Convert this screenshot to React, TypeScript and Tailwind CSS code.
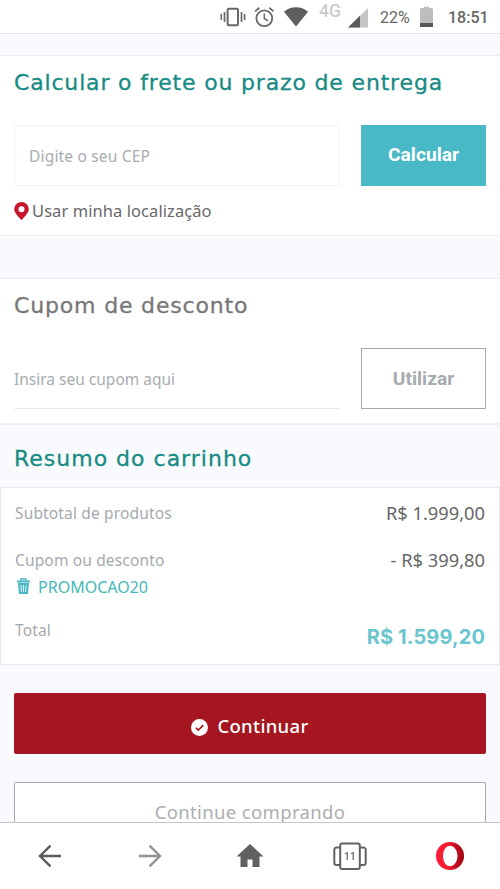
import type { ReactNode } from "react";

type SummaryRowProps = {
  label: string;
  children: ReactNode;
};

function StatusBar() {
  return (
    <header className="flex h-[34px] shrink-0 items-center border-b border-[#e4e6e8] bg-white pl-[220px] font-[Roboto,sans-serif] text-[#666]">
      {/* Vibrate */}
      <svg className="h-[22px] w-[26px] shrink-0" viewBox="0 0 26 22" fill="none" stroke="#686868" strokeWidth="2">
        <rect x="7.6" y="2.8" width="10.4" height="16.4" rx="1.2" />
        <path d="M4.5 6v10M21.5 6v10" strokeWidth="1.7" />
        <path d="M1.3 8v6M24.6 8v6" strokeWidth="1.6" />
      </svg>
      {/* Alarm */}
      <svg className="ml-[8px] h-[22px] w-[20px] shrink-0" viewBox="0 0 20 22" fill="none" stroke="#686868" strokeWidth="1.8">
        <circle cx="10.3" cy="12.2" r="7.9" />
        <path d="M10.3 7.5v5l3.7 2.3" strokeWidth="1.5" />
        <path d="M1.1 5.4 5.3 1.8M15.3 1.8l4.200 3.6" />
      </svg>
      {/* Wi-Fi */}
      <svg className="ml-[9px] h-[22px] w-[26px] shrink-0" viewBox="0 0 26 22">
        <path d="M1 5.700C8-.1 18-.1 25 5.700L13 20.600Z" fill="#5f5f5f" />
      </svg>
      <span className="ml-[10px] mt-[-9px] w-[24px] text-[17.5px] font-medium leading-none text-[#cbcbcb]">4G</span>
      {/* Signal */}
      <svg className="ml-[5px] h-[22px] w-[20px] shrink-0" viewBox="0 0 20 22">
        <path d="M0 21.500 20 2v19.500Z" fill="#c4c4c4" />
        <path d="M0 21.500 12 9.800v11.700Z" fill="#5b5b5b" />
      </svg>
      <span className="ml-[12px] mt-[3px] w-[32px] whitespace-nowrap text-[16px] leading-none">22%</span>
      {/* Battery */}
      <svg className="ml-[8px] h-[22px] w-[13px] shrink-0" viewBox="0 0 13 22">
        <path d="M0 3.500A1.500 1.500 0 0 1 1.500 2H4V.8h5V2h2.500A1.500 1.500 0 0 1 13 3.500V17H0Z" fill="#bdbdbd" />
        <path d="M0 17h13v4H0Z" fill="#595959" />
      </svg>
      <span className="ml-[15px] mt-[3px] whitespace-nowrap text-[16px] font-medium leading-none">18:51</span>
    </header>
  );
}

function SummaryRow({ label, children }: SummaryRowProps) {
  return (
    <div className="flex h-6 items-center justify-between">
      <span className="mt-[2px] text-[15.5px] tracking-[0.15px] text-[#a5aaaf]">{label}</span>
      {children}
    </div>
  );
}

function BrowserNav() {
  return (
    <nav className="flex h-[67px] shrink-0 items-center justify-around border-t border-[#c4c4c4] bg-white">
      <svg className="h-[34px] w-[34px]" viewBox="0 0 34 34" fill="none" stroke="#5c5c5c" strokeWidth="2.4">
        <path d="M28 17H7.500M17.500 6.700 7 17l10.500 10.300" />
      </svg>
      <svg className="h-[34px] w-[34px]" viewBox="0 0 34 34" fill="none" stroke="#929292" strokeWidth="2.4">
        <path d="M6 17h20.500M16.500 6.700 27 17 16.500 27.300" />
      </svg>
      <svg className="h-[34px] w-[34px]" viewBox="0 0 34 34" fill="#606060">
        <path d="M17 5 3.500 17.400h4V28h7v-7.500h5V28h7V17.400h4Z" />
      </svg>
      <div className="relative flex h-[34px] w-[34px] items-center justify-center">
        <svg className="absolute inset-0" viewBox="0 0 34 34" fill="none" stroke="#626262" strokeWidth="2">
          <rect x="7.200" y="4.500" width="19.600" height="25.500" rx="2" />
          <path d="M7 8.500H3.500A2.200 2.200 0 0 0 1.300 10.700v13.100A2.200 2.200 0 0 0 3.500 26H7M27 8.500h3.500a2.200 2.200 0 0 1 2.200 2.200v13.100a2.200 2.200 0 0 1-2.200 2.200H27" />
        </svg>
        <span className="relative font-[Roboto,sans-serif] text-[10px] font-medium tracking-[0.3px] text-[#626262]">11</span>
      </div>
      <svg className="h-[34px] w-[34px]" viewBox="0 0 34 34">
        <defs>
          <linearGradient id="opera" x1="0" x2="1" y1="0" y2="0">
            <stop offset="0.35" stopColor="#f81b33" />
            <stop offset="1" stopColor="#9c0312" />
          </linearGradient>
        </defs>
        <path fillRule="evenodd" fill="url(#opera)" d="M17 3a14 14 0 1 1 0 28 14 14 0 0 1 0-28Zm0 3.700c-4 0-7 4.600-7 10.300S13 27.300 17 27.300s7.500-4.600 7.500-10.300-3.500-10.300-7.500-10.300Z" />
      </svg>
    </nav>
  );
}

export default function App() {
  return (
    <div className="flex h-[889px] w-[500px] flex-col overflow-hidden bg-[#f8fafd] font-['Noto_Sans',sans-serif]">
      <StatusBar />

      <main className="min-h-0 flex-1 overflow-hidden pt-[21px]">
        {/* Shipping estimate */}
        <section className="h-[181px] border-y border-[#e9edf1] bg-white px-[14px] pt-[11px]">
          <h2 className="h-8 whitespace-nowrap font-['DejaVu_Sans',sans-serif] text-[22px] leading-8 tracking-[0.83px] text-[#178b84] [-webkit-text-stroke:0.3px]">
            Calcular o frete ou prazo de entrega
          </h2>
          <div className="mt-[26px] flex gap-[21px]">
            <input
              type="text"
              placeholder="Digite o seu CEP"
              className="h-[61px] w-[326px] border border-[#f3f4f6] bg-white px-[14px] text-[15.5px] tracking-[0.18px] outline-none placeholder:text-[#a7acb1]"
            />
            <button className="h-[61px] w-[125px] bg-[#49b9c7] font-[Roboto,sans-serif] text-[19.2px] font-bold text-white">
              Calcular
            </button>
          </div>
          <a className="mt-[13px] flex h-6 items-center gap-[3px] whitespace-nowrap text-[16.5px] tracking-[0.07px] text-[#686868]">
            <svg className="h-[18px] w-[15px]" viewBox="0 0 15 18">
              <path fillRule="evenodd" fill="#c5162b" d="M7.500 0A7.300 7.300 0 0 1 14.800 7.200C14.800 10 11 14.600 7.500 18 4 14.600.2 10 .2 7.200A7.300 7.300 0 0 1 7.500 0Zm0 4.200a3 3 0 1 0 0 6 3 3 0 0 0 0-6Z" />
            </svg>
            Usar minha localização
          </a>
        </section>

        {/* Discount coupon */}
        <section className="mt-[42px] h-[147px] border-b-2 border-t border-b-[#edf0f2] border-t-[#e6e9ed] bg-white px-[14px] pt-[11px]">
          <h2 className="h-8 whitespace-nowrap font-['DejaVu_Sans',sans-serif] text-[22px] leading-8 tracking-[0.83px] text-[#777] [-webkit-text-stroke:0.3px]">
            Cupom de desconto
          </h2>
          <div className="mt-[26px] flex gap-[21px]">
            <input
              type="text"
              placeholder="Insira seu cupom aqui"
              className="h-[61px] w-[326px] border-b border-[#e8eaec] bg-white pt-[2px] text-[15.5px] outline-none placeholder:text-[#a7acb1]"
            />
            <button className="h-[61px] w-[125px] border border-[#a3a8ab] bg-white pt-[2px] font-[Roboto,sans-serif] text-[19.2px] font-bold text-[#a6abae]">
              Utilizar
            </button>
          </div>
        </section>

        {/* Cart summary */}
        <h2 className="ml-[14px] mt-[18px] h-8 whitespace-nowrap font-['DejaVu_Sans',sans-serif] text-[22px] leading-8 tracking-[1px] text-[#178b84] [-webkit-text-stroke:0.3px]">
          Resumo do carrinho
        </h2>
        <section className="mt-[12px] h-[178px] border border-[#e6e9ee] bg-white px-[14px] pt-[13px]">
          <SummaryRow label="Subtotal de produtos">
            <span className="mt-[-1px] text-[18.3px] text-[#666]">R$ 1.999,00</span>
          </SummaryRow>
          <div className="mt-[23px]">
            <SummaryRow label="Cupom ou desconto">
              <span className="mt-[-1px] text-[18.3px] text-[#666]">- R$ 399,80</span>
            </SummaryRow>
            <button className="mt-[3px] flex h-6 items-center gap-[8px] pl-[2px] text-[16px] text-[#44b8b8]">
              <svg className="mt-[-2px] h-[16px] w-[13px]" viewBox="0 0 13 16">
                <path d="M4 3V1h5v2" fill="none" stroke="#48b9c5" strokeWidth="1.3" />
                <path d="M0 2.500h13v2H0ZM1 5h11l-1 11H2Z" fill="#48b9c5" />
                <path d="m4 7 .4 7M6.500 7v7M9 7l-.4 7" stroke="#fff" strokeWidth="0.800" />
              </svg>
              PROMOCAO20
            </button>
          </div>
          <div className="mt-[19px]">
            <SummaryRow label="Total">
              <strong className="mt-[13px] font-[Inter,sans-serif] text-[20px] font-bold tracking-[0.1px] text-[#6bc5ce]">R$ 1.599,20</strong>
            </SummaryRow>
          </div>
        </section>

        <div className="px-[14px] pt-[28px]">
          <button className="flex h-[61px] w-full items-center justify-center gap-[9px] rounded-[2px] bg-[#a51620] pt-[5px] text-[18.5px] font-medium tracking-[0.3px] text-white">
            <svg className="mt-[2px] h-[17px] w-[17px]" viewBox="0 0 17 17">
              <circle cx="8.500" cy="8.500" r="8.500" fill="#fff" />
              <path d="m4.900 8.700 2.400 2.400 5-5" fill="none" stroke="#a51620" strokeWidth="1.600" />
            </svg>
            Continuar
          </button>
          <button className="mt-[28px] h-[40px] w-full rounded-t-[2px] border border-b-0 border-[#a3a7a9] bg-white pt-[18px] text-[18.5px] leading-[22px] tracking-[0.35px] text-[#abaeb0]">
            Continue comprando
          </button>
        </div>
      </main>

      <BrowserNav />
    </div>
  );
}
